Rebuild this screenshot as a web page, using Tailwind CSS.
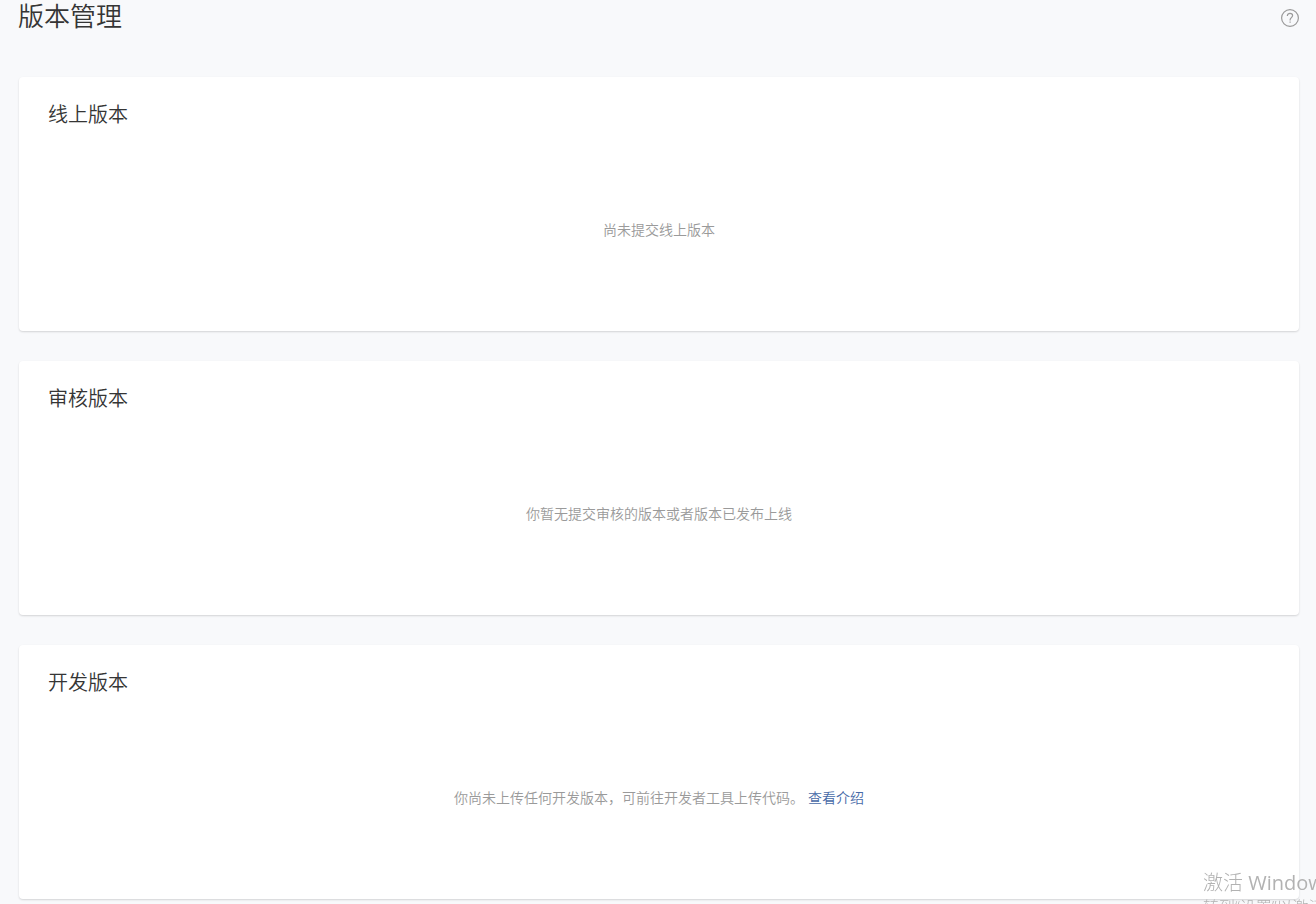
<!DOCTYPE html>
<html lang="zh-CN">
<head>
<meta charset="utf-8">
<title>版本管理</title>
<script src="https://cdn.jsdelivr.net/npm/@tailwindcss/browser@4"></script>
</head>
<body class="h-screen overflow-hidden bg-[#f8f9fb] font-['Noto_Sans_CJK_SC',sans-serif] font-[350] text-[#353535]">
<main class="pr-[17px] pl-[19px]">
  <header class="mb-[41px] flex h-9 items-center justify-between">
    <h1 class="-ml-px pb-[6px] text-[26px] leading-[30px] font-[350]">版本管理</h1>
    <button type="button" aria-label="帮助" class="text-[#9a9a9a]">
      <svg class="block size-[18px]" viewBox="0 0 18 18" fill="none" stroke="currentColor" stroke-width="1.2">
        <circle cx="9" cy="9" r="8.4"/>
        <path d="M6.4 6.9V6.6C6.4 5.2 7.5 4.4 9 4.4s2.6.8 2.6 2.2c0 2-2.5 2.1-2.5 4.3v.6M9.1 12.5v1.3"/>
      </svg>
    </button>
  </header>
  <div class="flex flex-col gap-[30px]">
    <section class="rounded bg-white px-[29px] pt-[21px] pb-[87px] shadow-[0_1px_2px_rgba(0,0,0,0.15)]">
      <h2 class="text-xl leading-8 font-[350]">线上版本</h2>
      <p class="pt-[84px] text-center text-sm leading-[30px] text-[#9a9a9a]">尚未提交线上版本</p>
    </section>
    <section class="rounded bg-white px-[29px] pt-[21px] pb-[87px] shadow-[0_1px_2px_rgba(0,0,0,0.15)]">
      <h2 class="text-xl leading-8 font-[350]">审核版本</h2>
      <p class="pt-[84px] text-center text-sm leading-[30px] text-[#9a9a9a]">你暂无提交审核的版本或者版本已发布上线</p>
    </section>
    <section class="rounded bg-white px-[29px] pt-[21px] pb-[87px] shadow-[0_1px_2px_rgba(0,0,0,0.15)]">
      <h2 class="text-xl leading-8 font-[350]">开发版本</h2>
      <p class="pt-[84px] text-center text-sm leading-[30px] text-[#9a9a9a]">你尚未上传任何开发版本，可前往开发者工具上传代码。<a href="#" class="ml-1 text-[#476aa7]">查看介绍</a></p>
    </section>
  </div>
</main>
<aside class="pointer-events-none fixed top-[869px] left-[calc(100%-113px)] font-['Open_Sans','Noto_Sans_CJK_SC',sans-serif] font-light whitespace-nowrap text-[#b2b2b2]">
  <p class="text-xl leading-7">激活 <span class="font-normal">Windows</span></p>
  <p class="text-base leading-5">转到“设置”以激活 Windows。</p>
</aside>
</body>
</html>
